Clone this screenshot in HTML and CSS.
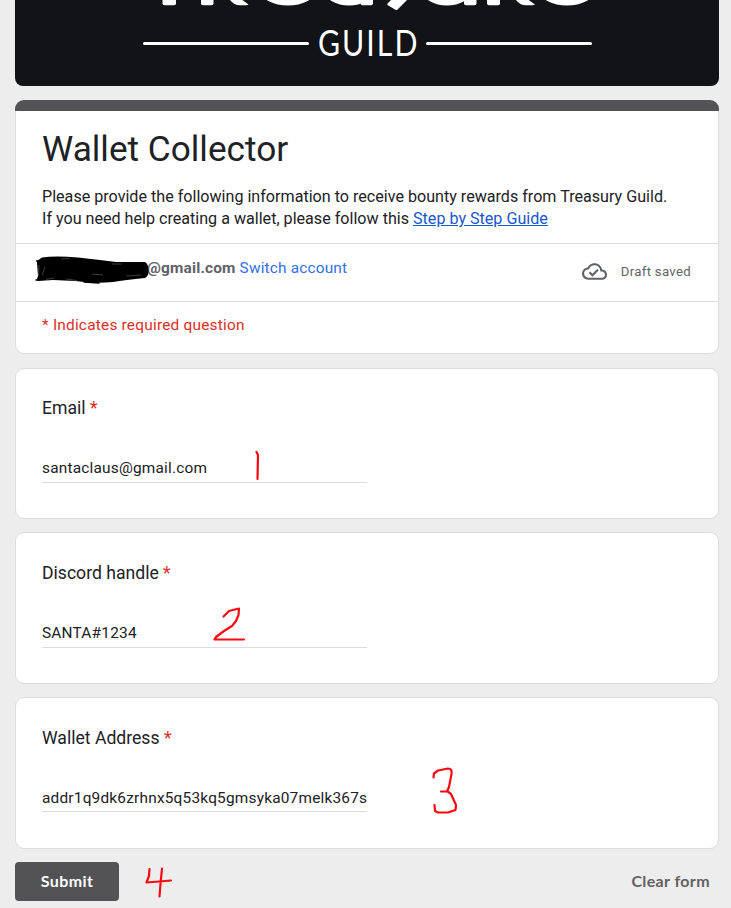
FILE: index.html
```html
<!DOCTYPE html>
<html lang="en">
<head>
<meta charset="utf-8">
<title>Wallet Collector</title>
<link rel="stylesheet" href="styles.css">
</head>
<body>
<main class="page">
  <header class="banner">
    <svg class="banner-art" width="704" height="12" viewBox="15 0 704 12" aria-hidden="true">
      <g fill="#fff">
        <rect x="162.500" y="-6" width="13.500" height="11.200" rx="2"/>
        <rect x="201" y="-6" width="12.500" height="11.200" rx="2"/>
        <path d="M225 -4L237 -4L248.500 4.500Q248 5.300 246 5.300H240Q234 5.300 230 0Z"/>
        <ellipse cx="288" cy="-9" rx="27" ry="14.500"/>
        <ellipse cx="349" cy="-9" rx="24" ry="14.500"/>
        <rect x="360.500" y="-6" width="12.500" height="11.200" rx="2"/>
        <path d="M398 -7L412 -7L407 0L397.500 9.500Q396.500 10.500 395 9.500L387.500 5Q387 4 388 3Z"/>
        <ellipse cx="447" cy="-9" rx="24" ry="14.500"/>
        <rect x="464" y="-6" width="12.500" height="11.200" rx="2"/>
        <rect x="487" y="-6" width="13" height="11.200" rx="2"/>
        <path d="M511 -4L523 -4L535 4.500Q534 5.300 532 5.300H526Q520 5.300 516 0Z"/>
        <ellipse cx="567" cy="-9" rx="27" ry="14.500"/>
      </g>
    </svg>
    <div class="guild-row">
      <span class="rule"></span>
      <span class="guild">GUILD</span>
      <span class="rule"></span>
    </div>
  </header>

  <section class="card intro">
    <div class="accent"></div>
    <div class="intro-text">
      <h1>Wallet Collector</h1>
      <p>Please provide the following information to receive bounty rewards from Treasury Guild.<br>If you need help creating a wallet, please follow this <a href="#">Step by Step Guide</a></p>
    </div>
    <div class="account">
      <div class="who"><b>@gmail.com</b> <a href="#">Switch account</a></div>
      <svg class="scribble" width="118" height="30" viewBox="34 255 118 30" aria-hidden="true">
        <path d="M37 261L42 257.500Q55 255.500 78 257.500L100 260L116 262L145 262Q148.500 264 148.500 270Q149 276 145 278Q125 280 113 282Q95 284 75 281L53 280L38 281L37 279L38 276L37 263Z" fill="#000"/>
        <path d="M36 280L39 280M36.500 261L39 261M84 282L99 283" stroke="#000" stroke-width="1.500" stroke-linecap="round"/>
        <path d="M39 265L38.500 276M42 275L45 267M46 279.500L54 278M66 279L77 280.500M61 259L70 258.500M92 274L103 275M126 276L141 275M112 264L122 264" stroke="#999" stroke-width=".4" fill="none"/>
      </svg>
      <div class="draft">
        <svg width="25" height="25" viewBox="0 0 24 24" aria-hidden="true">
          <path fill="#5f6368" d="M19.350 10.040C18.670 6.590 15.640 4 12 4 9.110 4 6.600 5.640 5.350 8.040 2.340 8.360 0 10.910 0 14c0 3.310 2.690 6 6 6h13c2.760 0 5-2.240 5-5 0-2.640-2.050-4.780-4.650-4.960zM19 18H6c-2.210 0-4-1.790-4-4 0-2.050 1.530-3.760 3.560-3.970l1.070-.11.500-.95C8.080 7.140 9.940 6 12 6c2.620 0 4.880 1.860 5.390 4.430l.300 1.500 1.530.110c1.560.100 2.780 1.410 2.780 2.960 0 1.650-1.350 3-3 3zm-9-3.820l-2.090-2.090L6.500 13.500 10 17l6.010-6.010-1.410-1.410z"/>
        </svg>
        <span>Draft saved</span>
      </div>
    </div>
    <p class="required-note">* Indicates required question</p>
  </section>

  <section class="card question email">
    <h2>Email <i>*</i></h2>
    <div class="field">santaclaus@gmail.com</div>
    <svg class="mark" width="12" height="36" viewBox="252 448 12 36" aria-hidden="true"><path d="M256.500 452L258 455L257.500 479"/></svg>
  </section>

  <section class="card question discord">
    <h2>Discord handle <i>*</i></h2>
    <div class="field">SANTA#1234</div>
    <svg class="mark" width="36" height="38" viewBox="211 605 36 38" aria-hidden="true"><path d="M223.500 616.500L229 611L239 608.500L238.500 615L236 621L232 626L224 631L216 637L214.500 639.500H244"/></svg>
  </section>

  <section class="card question wallet">
    <h2>Wallet Address <i>*</i></h2>
    <div class="field">addr1q9dk6zrhnx5q53kq5gmsyka07melk367s</div>
    <svg class="mark" width="30" height="50" viewBox="430 765 30 50" aria-hidden="true"><path d="M433.500 777.500L434 773.500L438 770.500L448 768.500Q452.500 768.500 451.500 774L449 787L447 791.500H441M447 791L451 794L456 805L455.500 810L448 812.500H438L435 811L434.500 805"/></svg>
  </section>

  <footer class="actions">
    <button class="submit" type="button">Submit</button>
    <svg class="four" width="30" height="34" viewBox="143 865 30 34" aria-hidden="true"><path d="M149.500 869L149 876L146.500 882.500L159 881.500L171 880.500M162 868.500L160.500 884L159.500 896.500"/></svg>
    <button class="clear" type="button">Clear form</button>
  </footer>
</main>
</body>
</html>
```
FILE: styles.css
```css
* { box-sizing: border-box; }
body {
  margin: 0;
  background: #ededed;
  color: #202124;
  font-family: Roboto, "Liberation Sans", sans-serif;
}
h1, h2, p { margin: 0; font-weight: 400; }
.page { width: 704px; height: 908px; margin-left: 15px; overflow: hidden; }

.banner {
  height: 86px;
  background: #121316;
  border-radius: 0 0 8px 8px;
  margin-bottom: 14px;
}
.banner-art { display: block; }
.guild-row {
  display: flex;
  align-items: center;
  height: 62px;
  padding-left: 128px;
}
.rule { flex: none; width: 166px; height: 3px; border-radius: 2px; background: #fff; }
.guild {
  flex: none;
  width: 117px;
  padding: 0 0 2px 9px;
  color: #fff;
  font: 400 36px/40px Lato, sans-serif;
  letter-spacing: 2.4px;
  white-space: nowrap;
  transform: scaleX(.84);
  transform-origin: 9px 50%;
}

.card {
  position: relative;
  background: #fff;
  border: 1px solid #dadce0;
  border-radius: 9px;
}
.intro { height: 254px; margin-bottom: 14px; }
.accent {
  height: 11px;
  margin: -1px -1px 0;
  background: #535355;
  border-radius: 9px 9px 0 0;
}
.intro-text { height: 132px; padding: 14px 26px 0; }
h1 { font-size: 35.200px; line-height: 48px; white-space: nowrap; }
.intro-text p {
  margin-top: 13px;
  font-size: 16.130px;
  line-height: 22px;
  white-space: nowrap;
}
.intro-text a { color: #1a56cc; }
.account {
  display: flex;
  justify-content: space-between;
  height: 59px;
  padding: 0 27px 0 131px;
  border-top: 1px solid #dadce0;
  border-bottom: 1px solid #dadce0;
}
.who {
  padding-top: 13px;
  color: #5f6368;
  font-size: 15.400px;
  line-height: 22px;
  letter-spacing: .18px;
}
.who a { color: #3270e8; text-decoration: none; }
.scribble { position: absolute; left: 18px; top: 154px; }
.draft {
  display: flex;
  align-items: center;
  gap: 14px;
  height: 55px;
  color: #5f6368;
  font-size: 13.200px;
  letter-spacing: .3px;
}
.required-note {
  padding: 12px 26px;
  color: #d93025;
  font-size: 15.400px;
  line-height: 22px;
  letter-spacing: .22px;
}

.question { height: 152px; margin-bottom: 13px; padding: 27px 26px; }
.question.email { height: 151px; padding-top: 26px; }
h2 { font-size: 17.600px; line-height: 26px; }
h2 i { color: #d93025; font-style: normal; }
.field {
  width: 325px;
  height: 37px;
  margin-top: 25px;
  padding-top: 10px;
  border-bottom: 1px solid #dadce0;
  font-size: 15.400px;
  line-height: 24px;
  letter-spacing: .21px;
  white-space: nowrap;
}
.wallet .field { height: 36px; }

.mark { position: absolute; }
.mark, .four { fill: none; stroke: #fb0810; stroke-width: 2.200; stroke-linecap: round; stroke-linejoin: round; }
.email .mark { left: 236px; top: 79px; }
.discord .mark { left: 195px; top: 72px; }
.wallet .mark { left: 414px; top: 67px; }

.actions { display: flex; align-items: center; height: 39px; }
button { height: 39px; border: 0; padding: 0 0 2px; font: 700 16px/37px Lato, sans-serif; letter-spacing: .38px; }
.submit { width: 104px; border-radius: 4px; background: #535355; color: #fff; }
.four { margin-left: 24px; }
.clear { margin-left: auto; margin-right: 9px; background: none; color: #616163; }
```
